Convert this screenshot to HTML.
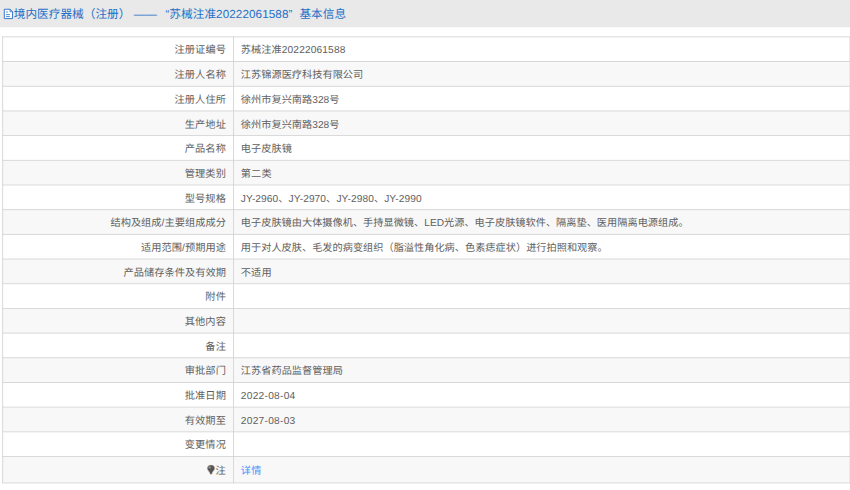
<!DOCTYPE html>
<html lang="zh-CN">
<head>
<meta charset="utf-8">
<title>境内医疗器械（注册）基本信息</title>
<style>
html,body{margin:0;padding:0;background:#fff;}
body{text-rendering:geometricPrecision;width:850px;height:490px;overflow:hidden;position:relative;font-family:"Liberation Sans",sans-serif;}
#wrap,#tw{position:absolute;left:0;top:0;width:998px;height:576px;transform-origin:0 0;transform:scale(0.852);}
#tw{transform:translate(-0.3px,0.7px) scale(0.852,0.8512);}
#hd{height:32px;line-height:34.7px;background:#e9e9e9;color:#2470c8;font-size:13.7px;white-space:nowrap;overflow:hidden;padding-left:3.6px;}
#hd .isp{display:inline-block;width:12.5px;height:1px;}
#ico{position:absolute;left:3px;top:8px;width:11px;height:12px;}
#hd .q{display:inline-block;}
#hd .n{letter-spacing:0.12px;}
#hd .ql{text-align:right;text-align-last:right;width:14.5px;}
#hd .qr{text-align:left;text-align-last:left;width:12.8px;}
.j{display:inline-block;white-space:nowrap;text-align:justify;text-align-last:justify;vertical-align:top;}
table{border-collapse:collapse;table-layout:fixed;width:995px;margin:42px 0 0 3px;font-size:12px;color:#5e5e5e;}
td{border:1px solid #d2d2d2;height:26.4px;padding:1.6px 8px 0;white-space:nowrap;overflow:hidden;line-height:16px;vertical-align:middle;font-size:11.96px;}
td.l{width:253.5px;text-align:right;padding-right:8.5px;font-size:12px;}
tr:nth-child(even) td{background:#f8f8f8;}
tr.last td{height:28.4px;}
td+td{border-right-color:#e8e8ec;}
.n1{letter-spacing:0.15px;}.n2{letter-spacing:0.08px;}.n3{letter-spacing:0.3px;}
a{color:#4890fa;text-decoration:none;}
.pin{display:inline-block;vertical-align:-1.2px;margin-right:0.6px;}
</style>
</head>
<body>
<div id="wrap">
<div id="hd"><span class="isp"></span><span class="j" style="width:390.2px">境内医疗器械（注册） ——<span class="q ql">“</span>苏械注准<span class="n">20222061588</span><span class="q qr">”</span>基本信息</span></div>
</div>
<svg id="ico" width="11" height="12" viewBox="0 0 11 12"><path d="M1.3 1.25H6.95L9.55 3.85V10.6H1.3z" fill="#fff" stroke="#2d72cb" stroke-width=".95"/><path d="M6.950 1.400V3.850H9.400z" fill="#8db4e8" stroke="#2369c6" stroke-width=".5"/><path d="M3.15 4h1.7M3.15 6.600h3.650M3.15 8.600h3.650" stroke="#3d7dd2" stroke-width=".95"/></svg>
<div id="tw">
<table>
<tr><td class="l"><span class="j" style="width:60.27px">注册证编号</span></td><td><span class="j" style="width:122.84px">苏械注准<span class="n1">20222061588</span></span></td></tr>
<tr><td class="l"><span class="j" style="width:60.27px">注册人名称</span></td><td><span class="j" style="width:143.69px">江苏锦源医疗科技有限公司</span></td></tr>
<tr><td class="l"><span class="j" style="width:60.27px">注册人住所</span></td><td><span class="j" style="width:115.83px">徐州市复兴南路328号</span></td></tr>
<tr><td class="l"><span class="j" style="width:48.27px">生产地址</span></td><td><span class="j" style="width:115.83px">徐州市复兴南路328号</span></td></tr>
<tr><td class="l"><span class="j" style="width:48.27px">产品名称</span></td><td><span class="j" style="width:60.02px">电子皮肤镜</span></td></tr>
<tr><td class="l"><span class="j" style="width:48.27px">管理类别</span></td><td><span class="j" style="width:36.11px">第二类</span></td></tr>
<tr><td class="l"><span class="j" style="width:48.27px">型号规格</span></td><td><span class="j" style="width:212.28px"><span class="n2">JY-2960、JY-2970、JY-2980、JY-2990</span></span></td></tr>
<tr><td class="l"><span class="j" style="width:135.59px">结构及组成/主要组成成分</span></td><td><span class="j" style="width:525.55px">电子皮肤镜由大体摄像机、手持显微镜、LED光源、电子皮肤镜软件、隔离垫、医用隔离电源组成。</span></td></tr>
<tr><td class="l"><span class="j" style="width:99.59px">适用范围/预期用途</span></td><td><span class="j" style="width:430.56px">用于对人皮肤、毛发的病变组织（脂溢性角化病、色素痣症状）进行拍照和观察。</span></td></tr>
<tr><td class="l"><span class="j" style="width:120.27px">产品储存条件及有效期</span></td><td><span class="j" style="width:36.11px">不适用</span></td></tr>
<tr><td class="l"><span class="j" style="width:24.27px">附件</span></td><td></td></tr>
<tr><td class="l"><span class="j" style="width:48.27px">其他内容</span></td><td></td></tr>
<tr><td class="l"><span class="j" style="width:24.27px">备注</span></td><td></td></tr>
<tr><td class="l"><span class="j" style="width:48.27px">审批部门</span></td><td><span class="j" style="width:119.78px">江苏省药品监督管理局</span></td></tr>
<tr><td class="l"><span class="j" style="width:48.27px">批准日期</span></td><td><span class="j" style="width:64.41px"><span class="n3">2022-08-04</span></span></td></tr>
<tr><td class="l"><span class="j" style="width:48.27px">有效期至</span></td><td><span class="j" style="width:64.41px"><span class="n3">2027-08-03</span></span></td></tr>
<tr><td class="l"><span class="j" style="width:48.27px">变更情况</span></td><td></td></tr>
<tr class="last"><td class="l"><svg class="pin" width="10" height="12" viewBox="0 0 10 12"><path d="M5 .4a4.3 4.3 0 0 1 4.3 4.3c0 2.4-2.9 3.3-3.4 6.5H4.100C3.600 8 .7 7.100.7 4.700A4.3 4.3 0 0 1 5 .4z" fill="#555" stroke="#b9a58f" stroke-width=".5"/><circle cx="3.5" cy="3.2" r="1.4" fill="#909090"/></svg><span class="j" style="width:12.27px">注</span></td><td><a><span class="j" style="width:24.16px">详情</span></a></td></tr>
</table>
</div>
</body>
</html>
